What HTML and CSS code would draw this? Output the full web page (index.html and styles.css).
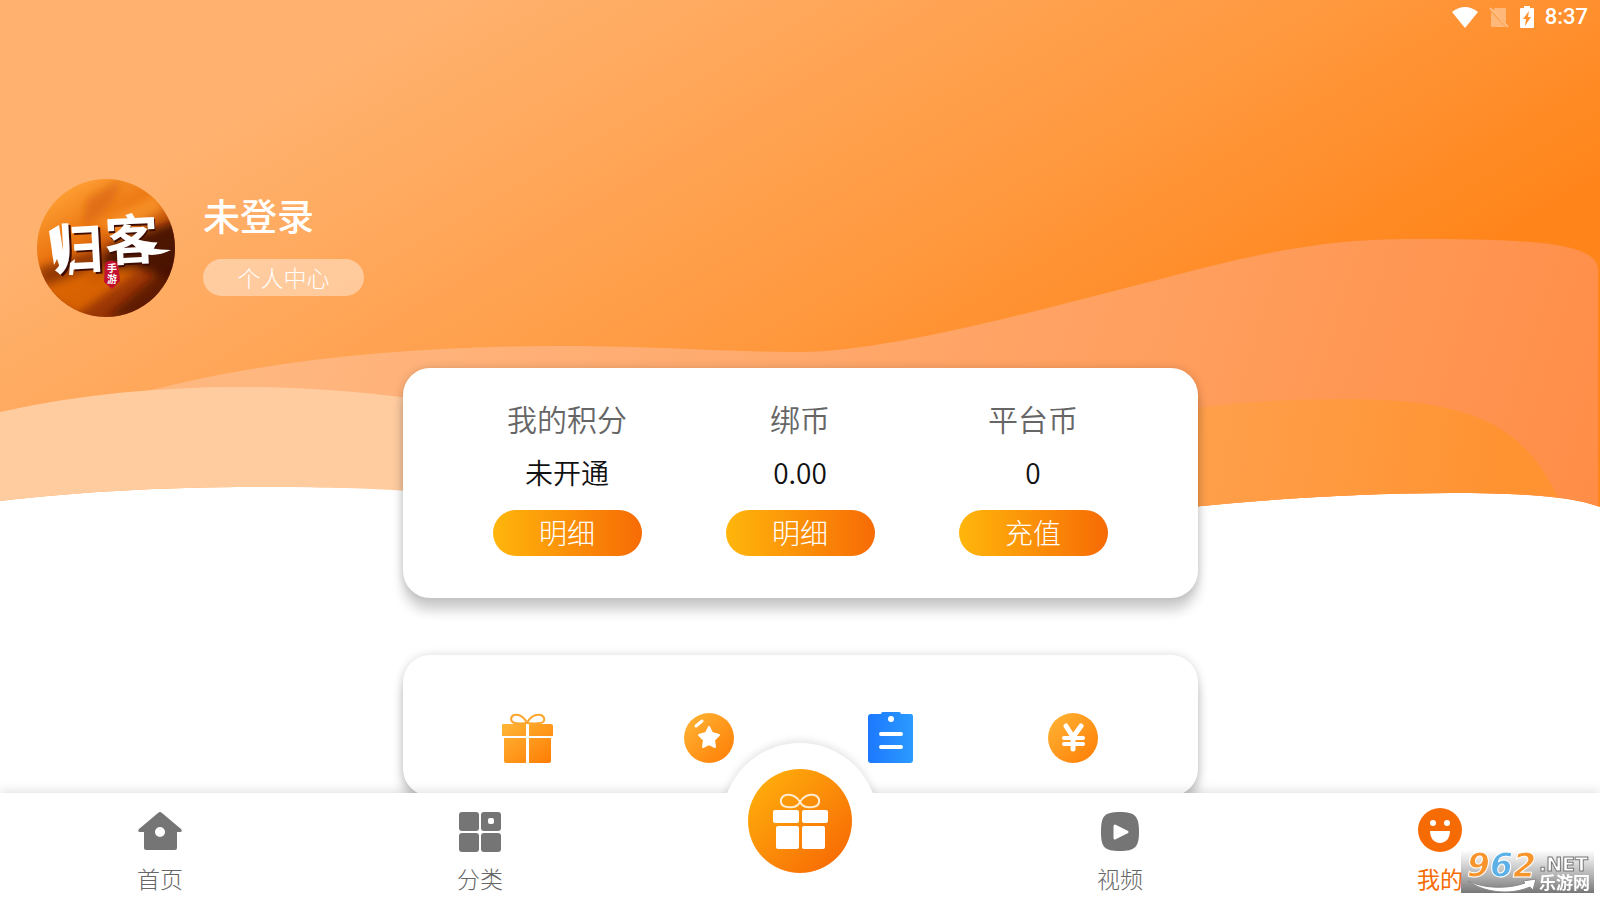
FILE: index.html
```html
<!DOCTYPE html>
<html lang="zh-CN">
<head>
    <meta charset="utf-8">
    <meta name="viewport" content="width=device-width, initial-scale=1">
    <title>我的</title>
    <link rel="stylesheet" href="styles.css">
</head>

<body>
    <main class="page">
        <!-- Orange background with the waves -->
        <svg class="waves" viewBox="0 0 1600 510" preserveAspectRatio="none" aria-hidden="true">
            <defs>
                <linearGradient id="sky" gradientUnits="userSpaceOnUse" x1="0" y1="250" x2="378" y2="901">
                    <stop offset="0" stop-color="#ffb26f"/>
                    <stop offset="0.6" stop-color="#ff993f"/>
                    <stop offset="1" stop-color="#ff8419"/>
                </linearGradient>
                <linearGradient id="middle" gradientUnits="userSpaceOnUse" x1="300" y1="200" x2="1620" y2="620">
                    <stop offset="0" stop-color="#ffb780"/>
                    <stop offset="0.6" stop-color="#ffa060"/>
                    <stop offset="1" stop-color="#ff8b44"/>
                </linearGradient>
                <linearGradient id="front" gradientUnits="userSpaceOnUse" x1="1190" y1="0" x2="1560" y2="60">
                    <stop offset="0" stop-color="#ffa352"/>
                    <stop offset="1" stop-color="#ff9332"/>
                </linearGradient>
            </defs>
            <path fill="url(#sky)" d="M0 0H1600V507C1570 496 1520 493 1450 493C1360 493 1270 499 1190 507H430V490C350 487 300 487 255 487C160 487 80 492 0 501Z"/>
            <path fill="url(#middle)" d="M100 405C220 366 380 346 560 346C660 346 720 352 800 352C890 352 1050 307 1157 280C1250 255 1320 239 1410 239C1530 239 1598 242 1598 270V506C1570 496 1520 493 1450 493C1360 493 1270 499 1190 507H430V450Z"/>
            <path fill="url(#front)" d="M1180 410C1230 403 1280 399 1345 399C1480 399 1525 430 1558 497C1520 493 1480 493 1450 493C1360 493 1270 499 1180 508Z"/>
            <path fill="#ffcca0" d="M0 412C80 394 160 387 240 387C300 387 350 391 410 398V491C350 487 300 487 255 487C160 487 80 492 0 501Z"/>
        </svg>

        <!-- Phone status bar -->
        <div class="status">
            <svg width="26" height="21" viewBox="0 0 26 21" aria-hidden="true">
                <path fill="#fff" d="M0 5Q13 -5 26 5L13 21Z"/>
            </svg>
            <svg width="20" height="21" viewBox="0 0 20 21" aria-hidden="true">
                <path fill="#fff" opacity="0.35" d="M6 1H16Q17 1 17 2V16L4 3ZM2 5L17 20H3Q2 20 2 19Z"/>
                <path stroke="#fff" stroke-width="2" opacity="0.4" d="M1 1L19 20"/>
            </svg>
            <svg width="14" height="22" viewBox="0 0 14 22" aria-hidden="true">
                <path fill="#fff" fill-rule="evenodd" d="M4 0H10V2H13Q14 2 14 3V21Q14 22 13 22H1Q0 22 0 21V3Q0 2 1 2H4ZM9 5L3 13H6L5 20L11 11H8Z"/>
            </svg>
            <span class="time">8:37</span>
        </div>

        <!-- User -->
        <section class="profile">
            <svg class="avatar" viewBox="0 0 138 138" role="img" aria-label="归客手游">
                <defs>
                    <linearGradient id="dusk" x1="0.3" y1="0" x2="0.85" y2="0.95">
                        <stop offset="0" stop-color="#ffa035"/>
                        <stop offset="0.35" stop-color="#ea7410"/>
                        <stop offset="0.6" stop-color="#ac4207"/>
                        <stop offset="1" stop-color="#8c2d02"/>
                    </linearGradient>
                    <clipPath id="round"><circle cx="69" cy="69" r="69"/></clipPath>
                    <filter id="soft" x="-20%" y="-20%" width="140%" height="140%"><feGaussianBlur stdDeviation="4"/></filter>
                </defs>
                <g clip-path="url(#round)">
                    <rect width="138" height="138" fill="url(#dusk)"/>
                    <g filter="url(#soft)">
                        <path fill="#d8650c" opacity="0.7" d="M50 20L85 0L75 25L45 50Z"/>
                        <path fill="#ff9d30" opacity="0.7" d="M60 45L120 15L128 30L80 55Z"/>
                        <path fill="#3d0b00" opacity="0.85" d="M75 65L145 40V105L100 88L50 105Z"/>
                        <path fill="#7c2702" opacity="0.7" d="M0 90L70 68L50 95L5 108Z"/>
                        <path fill="#e56b05" opacity="0.8" d="M0 112L60 88L100 92L40 135Z"/>
                        <path fill="#4a1000" opacity="0.7" d="M70 138L138 80V138Z"/>
                    </g>
                    <path fill="#c3102f" d="M68 84Q74 79 81 84L83 102L75 110L67 103Z"/>
                    <g class="logo-shade" transform="rotate(-3 69 69)">
                        <text class="logo" x="14" y="90">归</text>
                        <text class="logo" x="69" y="84">客</text>
                    </g>
                    <g fill="#fff" transform="rotate(-3 69 69)">
                        <text class="logo" x="12" y="88">归</text>
                        <text class="logo" x="68" y="82">客</text>
                    </g>
                    <!-- brush tails -->
                    <path fill="#fff" d="M94 63Q112 71 134 71Q118 79 104 74Z"/>
                    <path fill="#fff" d="M12 52L22 46L28 84L23 89L20 80L17 86ZM33 84L38 80L36 96L32 96Z"/>
                    <text class="seal" x="70" y="93">手</text>
                    <text class="seal" x="70" y="104">游</text>
                </g>
            </svg>
            <div class="user">
                <h1>未登录</h1>
                <button type="button" class="center-btn">个人中心</button>
            </div>
        </section>

        <!-- Points and coins -->
        <section class="card wallet">
            <div class="account">
                <h2>我的积分</h2>
                <p>未开通</p>
                <button type="button">明细</button>
            </div>
            <div class="account">
                <h2>绑币</h2>
                <p>0.00</p>
                <button type="button">明细</button>
            </div>
            <div class="account">
                <h2>平台币</h2>
                <p>0</p>
                <button type="button">充值</button>
            </div>
        </section>

        <!-- Shortcuts -->
        <section class="card tools">
            <a href="#gift" aria-label="礼包">
                <svg width="52" height="52" viewBox="0 0 52 52">
                    <defs>
                        <linearGradient id="orange" x1="0" y1="0" x2="1" y2="1">
                            <stop offset="0" stop-color="#ffb637"/>
                            <stop offset="1" stop-color="#ff7c03"/>
                        </linearGradient>
                    </defs>
                    <path fill="url(#orange)" d="M2 12H25V24H1V13Q1 12 2 12ZM28 12H50Q52 12 52 14V24H28ZM3 26H25V51H5Q3 51 3 49ZM28 26H50V49Q50 51 48 51H28Z"/>
                    <path fill="none" stroke="#fda62f" stroke-width="2" d="M26 11C23 5 18 2 13 3C9 5 9 10 14 11C18 12 23 11 26 11C29 5 34 2 40 3C44 5 45 10 39 11C34 12 29 11 26 11"/>
                </svg>
            </a>
            <a href="#points" aria-label="积分">
                <svg width="52" height="52" viewBox="0 0 52 52">
                    <circle cx="26" cy="26" r="25" fill="url(#orange)"/>
                    <path stroke="#fff" stroke-width="3" stroke-linecap="round" d="M13 14L19 9"/>
                    <path fill="#fff" stroke="#fff" stroke-width="2" stroke-linejoin="round" d="M26 15L29 21L36 23L31 28L32 35L26 32L20 35L21 28L16 23L23 21Z"/>
                </svg>
            </a>
            <a href="#tasks" aria-label="任务">
                <svg width="52" height="52" viewBox="0 0 52 52">
                    <defs>
                        <linearGradient id="blue"><stop offset="0" stop-color="#1d78ff"/><stop offset="1" stop-color="#2b9bff"/></linearGradient>
                    </defs>
                    <path fill="url(#blue)" d="M6 2H16Q16 0 18 0H34Q36 0 36 2H46Q48 2 48 5V48Q48 51 45 51H6Q3 51 3 48V5Q3 2 6 2Z"/>
                    <circle cx="26" cy="7" r="3" fill="#fff"/>
                    <path stroke="#fff" stroke-width="4" stroke-linecap="round" d="M16 22H36M16 35H36"/>
                </svg>
            </a>
            <a href="#coins" aria-label="平台币">
                <svg width="52" height="52" viewBox="0 0 52 52">
                    <circle cx="26" cy="26" r="25" fill="url(#orange)"/>
                    <path fill="none" stroke="#fff" stroke-width="4" stroke-linecap="round" d="M17 26H36M17 32H36"/>
                    <path fill="none" stroke="#fff" stroke-width="5" stroke-linecap="round" stroke-linejoin="round" d="M19 14L26 25L34 14M26 25V37"/>
                </svg>
            </a>
        </section>
    </main>

    <!-- Bottom navigation -->
    <nav class="tabs">
        <a href="#home">
            <svg width="44" height="44" viewBox="0 0 44 44" aria-hidden="true">
                <path fill="#757575" fill-rule="evenodd" d="M20 3Q22 1 24 3L43 19Q45 22 42 22H39V38Q39 40 37 40H8Q6 40 6 38V22H2Q-1 22 1 19ZM22 17A5 5 0 1 0 22 27A5 5 0 1 0 22 17Z"/>
            </svg>
            首页
        </a>
        <a href="#types">
            <svg width="44" height="44" viewBox="0 0 44 44" aria-hidden="true">
                <g fill="#757575">
                    <rect x="1" y="2" width="20" height="19" rx="3"/>
                    <rect x="23" y="2" width="20" height="19" rx="3"/>
                    <rect x="1" y="23" width="20" height="19" rx="3"/>
                    <rect x="23" y="23" width="20" height="19" rx="3"/>
                </g>
                <rect x="30" y="8" width="6" height="6" rx="2" fill="#fff"/>
            </svg>
            分类
        </a>
        <div class="middle">
            <a href="#welfare" class="gift" aria-label="福利">
                <svg width="104" height="104" viewBox="0 0 104 104">
                    <defs>
                        <linearGradient id="amber" x1="0.1" y1="0.1" x2="0.9" y2="0.9">
                            <stop offset="0" stop-color="#ffad0b"/>
                            <stop offset="1" stop-color="#f76b05"/>
                        </linearGradient>
                    </defs>
                    <circle cx="52" cy="52" r="52" fill="url(#amber)"/>
                    <g fill="#fff">
                        <rect x="25" y="41" width="26" height="13" rx="2"/>
                        <rect x="54" y="41" width="26" height="13" rx="2"/>
                        <rect x="28" y="57" width="23" height="23" rx="2"/>
                        <rect x="54" y="57" width="23" height="23" rx="2"/>
                    </g>
                    <path fill="none" stroke="#ffecd0" stroke-width="2" d="M52 33C49 28 44 25 38 26C31 28 31 37 39 38C45 39 50 37 52 33C55 28 60 25 66 26C73 28 73 37 65 38C59 39 54 37 52 33"/>
                </svg>
            </a>
        </div>
        <a href="#video">
            <svg width="44" height="44" viewBox="0 0 44 44" aria-hidden="true">
                <path fill="#757575" d="M22 2C37 2 41 6 41 22C41 37 37 41 22 41C6 41 3 37 3 22C3 6 6 2 22 2Z"/>
                <path fill="#fff" stroke="#fff" stroke-width="3" stroke-linejoin="round" d="M17 16L29 22L17 28Z"/>
            </svg>
            视频
        </a>
        <a href="#me" class="active">
            <svg width="44" height="44" viewBox="0 0 44 44" aria-hidden="true">
                <circle cx="22" cy="20" r="22" fill="#f76b05"/>
                <circle cx="15" cy="13" r="3" fill="#fff"/>
                <circle cx="29" cy="13" r="3" fill="#fff"/>
                <path fill="#fff" d="M12 21H32C32 28 28 33 22 33C16 33 12 28 12 21Z"/>
            </svg>
            我的
        </a>
    </nav>

    <!-- Site mark in the corner -->
    <svg class="mark" width="133" height="44" viewBox="0 0 133 44" role="img" aria-label="962.NET 乐游网">
        <defs>
            <linearGradient id="grey" x1="0" y1="0" x2="0" y2="1">
                <stop offset="0" stop-color="#888" stop-opacity="0"/>
                <stop offset="1" stop-color="#777"/>
            </linearGradient>
        </defs>
        <rect width="133" height="43" fill="url(#grey)"/>
        <text class="mark-num" x="6" y="27"><tspan fill="#f7952c">9</tspan><tspan fill="#5bb0e8">6</tspan><tspan fill="#f7952c">2</tspan></text>
        <text class="mark-net" x="78" y="21">.NET</text>
        <text class="mark-cn" x="78" y="39">乐游网</text>
        <path fill="#fff" stroke="#888" stroke-width="1" d="M7 31C24 39 48 39 64 33L62 31L75 29L72 40L69 37C48 46 22 42 7 31Z"/>
    </svg>
</body>
</html>
```
FILE: styles.css
```css
* {
    box-sizing: border-box;
}

body {
    margin: 0;
    height: 100vh;
    display: flex;
    flex-direction: column;
    overflow: hidden;
    background-color: #fff;
    font-family: "Noto Sans CJK SC", sans-serif;
}

h1, h2, p {
    margin: 0;
    font-weight: 400;
}

a {
    color: inherit;
    text-decoration: none;
}

svg {
    overflow: visible;
}

button {
    border: 0;
    padding: 0;
    font-family: inherit;
    font-weight: 300;
    color: #fff;
    cursor: pointer;
}

.page {
    position: relative;
    flex: 1;
    min-height: 0;
    overflow: hidden;
}

.waves {
    position: absolute;
    top: 0;
    left: 0;
    width: 100%;
    height: 510px;
    z-index: -1;
}

/* status bar */
.status {
    display: flex;
    justify-content: flex-end;
    align-items: center;
    gap: 11px;
    height: 34px;
    padding-right: 12px;
}

.time {
    font-family: Roboto, sans-serif;
    font-size: 22px;
    font-weight: 500;
    line-height: 38px;
    color: #fff;
}

/* user */
.profile {
    display: flex;
    align-items: flex-start;
    gap: 28px;
    height: 138px;
    margin: 145px 37px 51px;
}

.avatar {
    width: 138px;
    height: 138px;
}

.user {
    padding-top: 12px;
}

.logo {
    font-size: 54px;
    font-weight: 700;
}

.logo-shade {
    fill: #3d0b00;
}

.seal {
    font-size: 10px;
    font-weight: 700;
    fill: #fff;
}

.user h1 {
    font-size: 37px;
    font-weight: 500;
    line-height: 48px;
    color: #fff;
}

.center-btn {
    display: block;
    width: 161px;
    height: 37px;
    margin-top: 20px;
    border-radius: 20px;
    background-color: rgba(255, 255, 255, 0.4);
    font-size: 23px;
    line-height: 34px;
    padding-bottom: 2px;
}

/* cards */
.card {
    width: 90%;
    max-width: 795px;
    margin: 0 auto 57px;
    border-radius: 27px;
    background-color: #fff;
    box-shadow: 0 13px 12px rgba(0, 0, 0, 0.18), 0 0 10px rgba(0, 0, 0, 0.15);
}

.wallet {
    display: grid;
    grid-template-columns: repeat(3, 1fr);
    padding: 28px 48px 42px;
    text-align: center;
}

.account h2 {
    font-size: 30px;
    font-weight: 350;
    line-height: 44px;
    color: #666;
}

.account p {
    margin: 10px 0 16px;
    font-size: 28px;
    font-weight: 350;
    line-height: 44px;
    color: #111;
}

.account button {
    width: 149px;
    height: 46px;
    border-radius: 23px;
    background: linear-gradient(to right, #ffb60b, #f76b05);
    font-size: 28px;
    line-height: 44px;
    padding-bottom: 2px;
}

.tools {
    display: grid;
    grid-template-columns: repeat(4, 1fr);
    justify-items: center;
    padding: 57px 34px 32px;
}

.tools svg {
    display: block;
}

/* bottom navigation */
.tabs {
    position: relative;
    display: grid;
    grid-template-columns: repeat(5, 1fr);
    height: 106px;
    background-color: #fff;
    box-shadow: 0 -2px 10px rgba(0, 0, 0, 0.12);
    font-size: 23px;
    font-weight: 300;
    line-height: 34px;
    color: #666;
}

.tabs > a {
    display: flex;
    flex-direction: column;
    align-items: center;
    gap: 7px;
    padding-top: 17px;
}

.tabs .active {
    font-weight: 400;
    color: #f76b05;
}

/* white bump that carries the gift button */
.middle {
    position: relative;
    justify-self: center;
    width: 156px;
    height: 156px;
    margin-top: -50px;
    padding: 26px;
}

.middle::before {
    content: "";
    position: absolute;
    inset: 0;
    border-radius: 50%;
    background: #fff;
    box-shadow: 0 -2px 8px rgba(0, 0, 0, 0.12);
    clip-path: inset(-12px -12px 106px);
}

.gift {
    position: relative;
}

.gift svg {
    display: block;
}

/* corner mark */
.mark {
    position: fixed;
    right: 6px;
    bottom: 5px;
}

.mark-num {
    font-family: "DejaVu Sans", sans-serif;
    font-size: 33px;
    font-weight: 700;
    font-style: italic;
    stroke: #fff;
    stroke-width: 1px;
}

.mark-net {
    font-family: "DejaVu Sans", sans-serif;
    font-size: 19px;
    font-weight: 700;
    fill: #fff;
    stroke: #777;
    stroke-width: 1px;
}

.mark-cn {
    font-size: 17px;
    font-weight: 700;
    fill: #fff;
}
```
